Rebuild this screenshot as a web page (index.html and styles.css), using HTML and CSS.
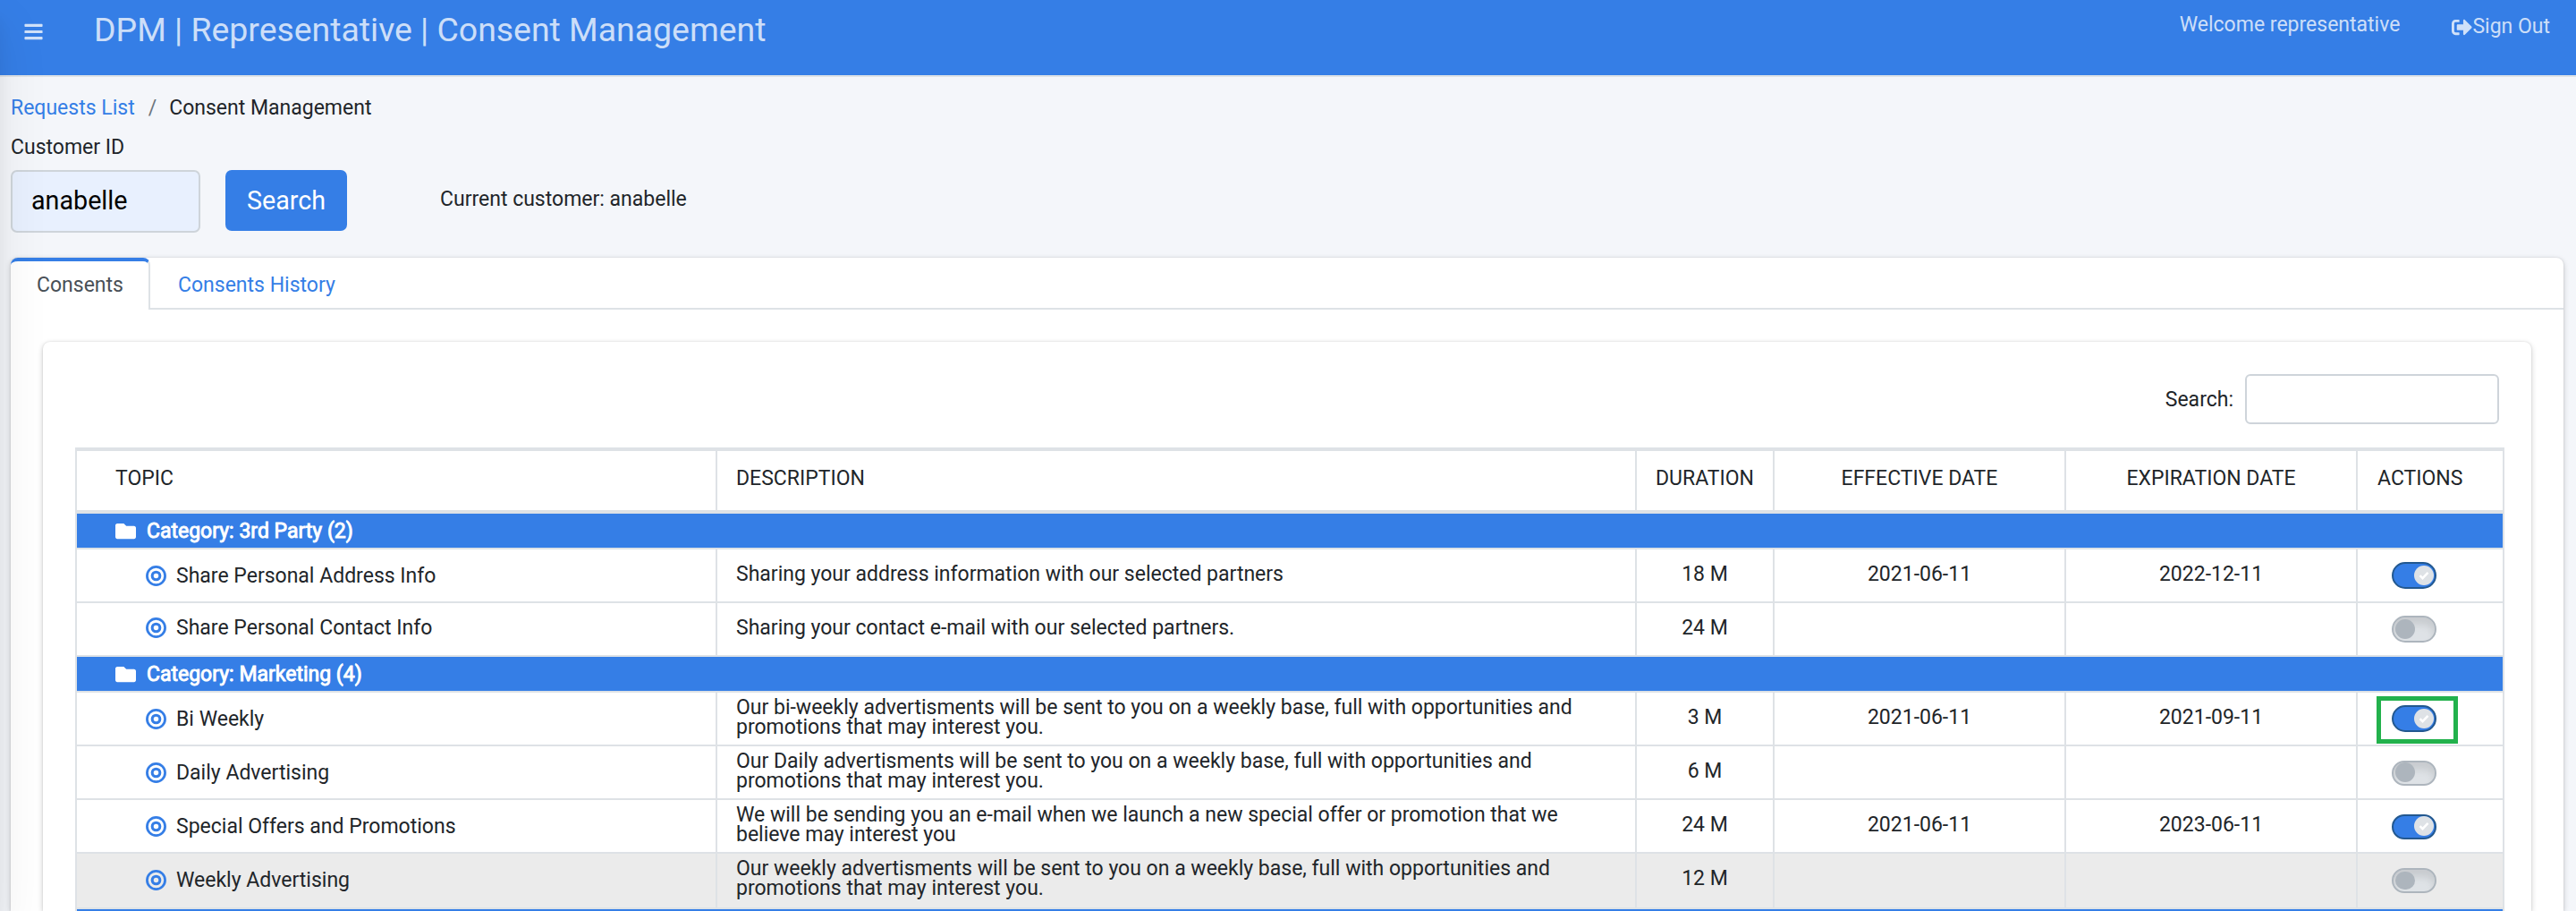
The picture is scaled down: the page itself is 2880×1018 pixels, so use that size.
FILE: index.html
```
<!DOCTYPE html>
<html lang="en">
<head>
<meta charset="utf-8">
<title>DPM | Representative | Consent Management</title>
<link rel="stylesheet" href="styles.css">
</head>
<body>
<svg class="sprite" aria-hidden="true">
  <symbol id="bars" viewBox="0 0 448 512"><path d="M16 132h416c8.800 0 16-7.200 16-16V76c0-8.800-7.200-16-16-16H16C7.200 60 0 67.200 0 76v40c0 8.800 7.200 16 16 16zm0 160h416c8.800 0 16-7.200 16-16v-40c0-8.800-7.200-16-16-16H16c-8.800 0-16 7.200-16 16v40c0 8.800 7.200 16 16 16zm0 160h416c8.800 0 16-7.200 16-16v-40c0-8.800-7.200-16-16-16H16c-8.800 0-16 7.200-16 16v40c0 8.800 7.200 16 16 16z"/></symbol>
  <symbol id="sign-out" viewBox="0 0 512 512"><path d="M497 273L329 441c-15 15-41 4.500-41-17v-96H152c-13.300 0-24-10.700-24-24v-96c0-13.300 10.700-24 24-24h136V88c0-21.400 25.900-32 41-17l168 168c9.300 9.400 9.300 24.600 0 34zM192 436v-40c0-6.600-5.400-12-12-12H96c-17.700 0-32-14.300-32-32V160c0-17.700 14.300-32 32-32h84c6.600 0 12-5.400 12-12V76c0-6.600-5.400-12-12-12H96c-53 0-96 43-96 96v192c0 53 43 96 96 96h84c6.600 0 12-5.400 12-12z"/></symbol>
  <symbol id="folder" viewBox="0 0 512 512"><path d="M464 128H272l-64-64H48C21.490 64 0 85.490 0 112v288c0 26.510 21.490 48 48 48h416c26.510 0 48-21.490 48-48V176c0-26.510-21.490-48-48-48z"/></symbol>
  <symbol id="target" viewBox="0 0 24 24"><g fill="none" stroke="currentColor"><circle cx="12" cy="12" r="10.500" stroke-width="2.900"/><circle cx="12" cy="12" r="4.500" stroke-width="3.200"/></g></symbol>
  <symbol id="check" viewBox="0 0 12 10"><path d="M1.500 5.200l3 3 6-6.400" fill="none" stroke="#fff" stroke-width="2.500"/></symbol>
</svg>
<aside class="sidebar"></aside>
<header class="navbar">
  <svg class="menu-icon"><use href="#bars"/></svg>
  <h1 class="title">DPM | Representative | Consent Management</h1>
  <span class="welcome">Welcome representative</span>
  <a class="sign-out"><svg class="icon"><use href="#sign-out"/></svg>Sign Out</a>
</header>
<main class="content">
  <nav class="breadcrumb"><a class="link">Requests List</a><span class="slash">/</span><span>Consent Management</span></nav>
  <label class="field-label">Customer ID</label>
  <div class="customer-form">
    <div class="customer-input">anabelle</div>
    <button class="btn">Search</button>
    <span class="current">Current customer: anabelle</span>
  </div>
  <section class="card tabs-card">
    <div class="tabs"><div class="tab active">Consents</div><div class="tab-rest"><a class="link">Consents History</a></div></div>
    <div class="card inner-card">
      <div class="filter"><span>Search:</span><div class="filter-input"></div></div>
      <table class="consents">
        <colgroup><col class="c-topic"><col class="c-desc"><col class="c-dur"><col class="c-date"><col class="c-date"><col class="c-act"></colgroup>
        <thead><tr><th class="topic-head">TOPIC</th><th>DESCRIPTION</th><th class="mid">DURATION</th><th class="mid">EFFECTIVE DATE</th><th class="mid">EXPIRATION DATE</th><th class="act-head">ACTIONS</th></tr></thead>
        <tbody>
          <tr class="category"><td colspan="6"><div class="cat"><svg class="icon"><use href="#folder"/></svg>Category: 3rd Party (2)</div></td></tr>
          <tr><td><div class="topic"><svg class="icon"><use href="#target"/></svg>Share Personal Address Info</div></td><td>Sharing your address information with our selected partners</td><td class="mid">18 M</td><td class="mid">2021-06-11</td><td class="mid">2022-12-11</td><td class="act"><div class="toggle on"><i class="knob"><svg class="check"><use href="#check"/></svg></i></div></td></tr>
          <tr class="raised"><td><div class="topic"><svg class="icon"><use href="#target"/></svg>Share Personal Contact Info</div></td><td>Sharing your contact e-mail with our selected partners.</td><td class="mid">24 M</td><td></td><td></td><td class="act"><div class="toggle"><i class="knob"></i></div></td></tr>
          <tr class="category"><td colspan="6"><div class="cat"><svg class="icon"><use href="#folder"/></svg>Category: Marketing (4)</div></td></tr>
          <tr><td><div class="topic"><svg class="icon"><use href="#target"/></svg>Bi Weekly</div></td><td>Our bi-weekly advertisments will be sent to you on a weekly base, full with opportunities and promotions that may interest you.</td><td class="mid">3 M</td><td class="mid">2021-06-11</td><td class="mid">2021-09-11</td><td class="act"><div class="toggle on"><i class="knob"><svg class="check"><use href="#check"/></svg></i><b class="highlight"></b></div></td></tr>
          <tr><td><div class="topic"><svg class="icon"><use href="#target"/></svg>Daily Advertising</div></td><td>Our Daily advertisments will be sent to you on a weekly base, full with opportunities and promotions that may interest you.</td><td class="mid">6 M</td><td></td><td></td><td class="act"><div class="toggle short"><i class="knob"></i></div></td></tr>
          <tr><td><div class="topic"><svg class="icon"><use href="#target"/></svg>Special Offers and Promotions</div></td><td>We will be sending you an e-mail when we launch a new special offer or promotion that we believe may interest you</td><td class="mid">24 M</td><td class="mid">2021-06-11</td><td class="mid">2023-06-11</td><td class="act"><div class="toggle short on"><i class="knob"><svg class="check"><use href="#check"/></svg></i></div></td></tr>
          <tr class="hovered"><td><div class="topic"><svg class="icon"><use href="#target"/></svg>Weekly Advertising</div></td><td>Our weekly advertisments will be sent to you on a weekly base, full with opportunities and promotions that may interest you.</td><td class="mid">12 M</td><td></td><td></td><td class="act"><div class="toggle short"><i class="knob small"></i></div></td></tr>
          <tr class="category last"><td colspan="6"></td></tr>
        </tbody>
      </table>
    </div>
  </section>
</main>
</body>
</html>
```
FILE: styles.css
```
* { box-sizing: border-box; }
html, body { height: 100%; }
body {
  margin: 0;
  overflow: hidden;
  background: #f4f6fa;
  color: #212529;
  font: 400 23px/30px Roboto, sans-serif;
}
.sprite { display: none; }
.icon { width: 23px; height: 23px; fill: currentColor; flex: none; }
.link { color: #357ee6; }

/* Collapsed drawer: only its shadow reaches the page */
.sidebar {
  position: fixed;
  z-index: 5;
  top: 0;
  bottom: 0;
  left: -500px;
  width: 500px;
  box-shadow: 0 28px 56px rgba(0,0,0,.08), 0 20px 20px rgba(0,0,0,.06);
}

.navbar {
  display: flex;
  align-items: flex-start;
  height: 86px;
  padding: 0 29px 0 27px;
  background: #357ee6;
  border-bottom: 2px solid #dee2e6;
  color: rgba(255,255,255,.77);
}
.menu-icon { width: 21px; height: 23px; margin-top: 24px; fill: currentColor; flex: none; }
.title { margin: 13px auto 0 57px; font-size: 37.400px; font-weight: 400; line-height: 40px; }
.welcome { margin-top: 13px; }
.sign-out { display: flex; align-items: center; margin: 15px 0 0 58px; }

.content { padding: 20px 14px 0 12px; }
.breadcrumb { display: flex; height: 30px; }
.slash { margin: 0 14px 0 15px; color: #6c757d; }
.field-label { display: block; margin-top: 14px; }
.customer-form { display: flex; align-items: flex-start; margin-top: 10px; }
.customer-input {
  width: 212px;
  height: 70px;
  padding: 0 21px;
  border: 2px solid #ced4da;
  border-radius: 7px;
  background: #e8f0fe;
  color: #000;
  font-size: 28.700px;
  line-height: 65px;
}
.btn {
  width: 136px;
  height: 68px;
  margin-left: 28px;
  padding: 0;
  border: 0;
  border-radius: 7px;
  background: #357ee6;
  color: #fff;
  font: 400 28.700px/68px Roboto, sans-serif;
}
.current { margin: 18px 0 0 104px; }

.card {
  background: #fff;
  border-radius: 8px;
  box-shadow: 0 0 2px rgba(0,0,0,.125), 0 2px 6px rgba(0,0,0,.2);
}
.tabs-card { height: 730px; margin-top: 28px; border-radius: 8px 8px 0 0; }
.tabs { display: flex; height: 58px; }
.tab {
  width: 156px;
  padding-left: 29px;
  border-top: 4px solid #357ee6;
  border-right: 2px solid #dee2e6;
  border-radius: 8px 8px 0 0;
  color: #495057;
  line-height: 53px;
}
.tab-rest { flex: 1; padding-left: 31px; border-bottom: 2px solid #dee2e6; line-height: 61px; }
.inner-card { height: 636px; margin: 36px 36px 0; padding: 36px 30px 0 36px; border-radius: 8px 8px 0 0; }
.filter { display: flex; justify-content: flex-end; align-items: center; gap: 13px; height: 56px; padding-right: 6px; }
.filter span { padding-top: 2px; }
.filter-input { width: 284px; height: 56px; border: 2px solid #ced4da; border-radius: 6px; }

.consents {
  width: 2716px;
  margin-top: 26px;
  table-layout: fixed;
  border-collapse: separate;
  border-spacing: 0;
  border-left: 2px solid #dee2e6;
}
.c-topic { width: 716px; }
.c-desc { width: 1028px; }
.c-dur { width: 154px; }
.c-date { width: 326px; }
.c-act { width: 164px; }
th {
  height: 74px;
  padding: 0 20px 5px 21px;
  border: solid #dee2e6;
  border-width: 4px 2px 4px 0;
  font-weight: 400;
  text-align: left;
}
td {
  height: 60px;
  padding: 0 20px 3px 21px;
  border: solid #dee2e6;
  border-width: 0 2px 2px 0;
  line-height: 22px;
}
.mid { padding-right: 0; padding-left: 0; text-align: center; }
.topic-head { padding-left: 43px; }
.act-head { padding-left: 22px; }
.category td { height: 40px; padding: 0 0 0 43px; background: #357ee6; color: #fff; }
.category.last td { height: 2px; border-bottom: 0; }
.cat { display: flex; align-items: center; gap: 12px; padding-top: 1px; -webkit-text-stroke: .9px #fff; }
.topic { display: flex; align-items: center; gap: 11px; margin: 4px 0 0 56px; }
.topic .icon { color: #357ee6; }
.raised .topic { margin-top: 0; }
.hovered td { height: 62px; padding-bottom: 5px; background: #ebebeb; }

td.act { padding: 14px 0 0 38px; vertical-align: top; }
.toggle {
  position: relative;
  display: flex;
  align-items: center;
  width: 50px;
  height: 30px;
  padding: 0 2px;
  border: 2px solid #adb5bd;
  border-radius: 15px;
  background: #dee2e6;
  box-shadow: inset 0 8px 8px rgba(0,0,0,.1);
}
.toggle.short { height: 28px; margin-top: 2px; }
.toggle.on { justify-content: flex-end; padding-right: 1px; background: #357ee6; border-color: #23588f; box-shadow: none; }
.knob { display: flex; align-items: center; justify-content: center; width: 22px; height: 22px; border-radius: 11px; background: #adb5bd; }
.knob.small { height: 20px; }
.short .knob { margin-bottom: 2px; }
.short .knob.small { margin-bottom: 0; }
.on .knob { background: #dee2e6; }
.check { width: 12px; height: 10px; }
.highlight { position: absolute; top: -12px; left: -19px; width: 91px; height: 53px; border: 5px solid #22b14c; }
```
